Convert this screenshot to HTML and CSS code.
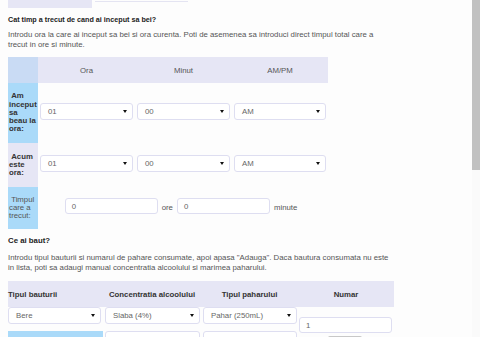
FILE: index.html
```html
<!DOCTYPE html>
<html>
<head>
<meta charset="utf-8">
<link rel="stylesheet" href="styles.css">
</head>
<body>
<div class="page">
  <div class="toprow">
    <div class="topbox"></div>
    <div class="topfield"></div>
  </div>

  <h3 class="title t1">Cat timp a trecut de cand ai inceput sa bei?</h3>
  <p class="intro">Introdu ora la care ai inceput sa bei si ora curenta. Poti de asemenea sa introduci direct timpul total care a trecut in ore si minute.</p>

  <table class="time">
    <tr class="head">
      <th class="corner"></th>
      <th>Ora</th>
      <th>Minut</th>
      <th>AM/PM</th>
    </tr>
    <tr class="r1">
      <td class="lbl blue">&nbsp;Am inceput sa beau la ora:</td>
      <td class="sel"><div class="select"><span>01</span><i class="arrow"></i></div></td>
      <td class="sel"><div class="select"><span>00</span><i class="arrow"></i></div></td>
      <td class="sel"><div class="select"><span>AM</span><i class="arrow"></i></div></td>
    </tr>
    <tr class="r2">
      <td class="lbl lav">&nbsp;Acum este ora:</td>
      <td class="sel"><div class="select"><span>01</span><i class="arrow"></i></div></td>
      <td class="sel"><div class="select"><span>00</span><i class="arrow"></i></div></td>
      <td class="sel"><div class="select"><span>AM</span><i class="arrow"></i></div></td>
    </tr>
    <tr class="r3">
      <td class="lbl blue light">&nbsp;Timpul care a trecut:</td>
      <td colspan="3" class="span">
        <div class="dur">
          <div class="input">0</div><span class="unit">ore</span><div class="input">0</div><span class="unit">minute</span>
        </div>
      </td>
    </tr>
  </table>

  <h3 class="title t2">Ce ai baut?</h3>
  <p class="intro p2">Introdu tipul bauturii si numarul de pahare consumate, apoi apasa "Adauga". Daca bautura consumata nu este in lista, poti sa adaugi manual concentratia alcoolului si marimea paharului.</p>

  <div class="drinks">
    <div class="dhead">
      <div class="dh c1">Tipul bauturii</div>
      <div class="dh c2">Concentratia alcoolului</div>
      <div class="dh c3">Tipul paharului</div>
      <div class="dh c4">Numar</div>
    </div>
    <div class="drow">
      <div class="dc c1"><div class="select"><span>Bere</span><i class="arrow"></i></div></div>
      <div class="dc c2"><div class="select"><span>Slaba (4%)</span><i class="arrow"></i></div></div>
      <div class="dc c3"><div class="select"><span>Pahar (250mL)</span><i class="arrow"></i></div></div>
      <div class="dc c4 low"><div class="input wide">1</div></div>
    </div>
    <div class="drow second">
      <div class="dc c1"><div class="bluebox"></div></div>
      <div class="dc c2"><div class="input full"></div></div>
      <div class="dc c3"><div class="input full"></div></div>
      <div class="dc c4"><div class="btn"></div></div>
    </div>
  </div>
</div>
<div class="scrollbar"><div class="thumb"></div></div>
</body>
</html>
```

FILE: styles.css
```css
html, body {
  margin: 0;
  padding: 0;
  background: #fdfdfd;
  overflow: hidden;
}
body {
  font-family: "Liberation Sans", Arial, sans-serif;
  font-size: 7.8px;
  color: #555;
  width: 480px;
  height: 337px;
}
.page {
  padding: 0 8px;
}
.toprow {
  display: flex;
  gap: 3px;
  height: 8px;
}
.topbox {
  width: 84px;
  height: 8px;
  background: #e6e6f5;
}
.topfield {
  width: 93px;
  height: 1px;
  border-bottom: 1px solid #e4e4f2;
}
.title {
  margin: 7px 0 0;
  font-size: 7.8px;
  line-height: 10px;
  font-weight: bold;
  color: #222;
}
.title.t1 {
  font-size: 7.2px;
}
.intro {
  margin: 5px 0 0;
  line-height: 9.5px;
  width: 378px;
  font-size: 7.8px;
}
.intro.p2 {
  margin-top: 7px;
  width: 384px;
}
.time {
  margin-top: 8px;
  border-collapse: collapse;
  border-spacing: 0;
  width: 320px;
  table-layout: fixed;
}
.time th, .time td {
  padding: 0;
}
.time .head th {
  height: 26px;
  background: #e6e6f5;
  font-weight: normal;
  color: #555;
  text-align: center;
}
.time .head th.corner {
  width: 30px;
  background: #c9dbf4;
}
.time .head th:nth-child(2), .time .head th:nth-child(3) {
  width: 97px;
}
.time .lbl {
  font-weight: bold;
  color: #333;
  line-height: 8.3px;
  padding: 0 1px;
  text-align: left;
  vertical-align: middle;
}
.time .lbl.light {
  font-weight: normal;
  color: #555;
}
.blue { background: #aadaf9; }
.lav { background: #e6e6f5; }
.r1 { height: 60px; }
.r2 { height: 44px; }
.r3 { height: 42px; }
.time .sel {
  padding: 0 2px 4px;
  vertical-align: middle;
}
.select {
  box-sizing: border-box;
  height: 17px;
  border: 1px solid #dedef1;
  border-radius: 3px;
  background: #fff;
  display: flex;
  align-items: center;
  justify-content: space-between;
  padding: 0 5px 0 7px;
  color: #666;
}
.arrow {
  width: 0;
  height: 0;
  border-left: 2px solid transparent;
  border-right: 2px solid transparent;
  border-top: 3px solid #111;
}
.time .span {
  vertical-align: middle;
  padding-bottom: 4px;
}
.dur {
  display: flex;
  align-items: center;
  justify-content: center;
}
.input {
  box-sizing: border-box;
  width: 93px;
  height: 16px;
  border: 1px solid #dedef1;
  border-radius: 3px;
  background: #fff;
  padding: 0 6px;
  display: flex;
  align-items: center;
  color: #666;
}
.unit {
  padding: 3px 4px 0;
}
.drinks {
  margin-top: 9px;
  width: 386px;
}
.dhead {
  display: flex;
  height: 26px;
  background: #e6e6f5;
  align-items: center;
}
.dh {
  font-weight: bold;
  color: #333;
}
.c1 { width: 95px; }
.c2 { width: 98px; }
.c3 { width: 97px; }
.c4 { width: 96px; }
.dh.c1 { text-align: left; }
.dh.c2, .dh.c3, .dh.c4 { text-align: center; }
.drow {
  display: flex;
  align-items: flex-start;
}
.dc.c1 .select { width: 93px; }
.dc.c2, .dc.c3 { padding-left: 2px; box-sizing: border-box; }
.dc.c2 .select { width: 95px; }
.dc.c3 .select { width: 94px; }
.low { padding-top: 10px; }
.input.wide { width: 93px; margin-left: 1px; }
.drow.second { margin-top: -2px; }
.bluebox {
  width: 95px;
  height: 12px;
  background: #aadaf9;
}
.input.full { width: 95px; height: 18px; }
.dc.c3 .input.full { width: 94px; }
.btn {
  margin: 5px 0 0 30px;
  width: 34px;
  height: 10px;
  background: #c8c8c8;
  border-radius: 2px;
}
.scrollbar {
  position: fixed;
  top: 0;
  right: 0;
  width: 8px;
  height: 337px;
  background: #fafafa;
}
.thumb {
  height: 170px;
  background: #c1c1c1;
}
```
